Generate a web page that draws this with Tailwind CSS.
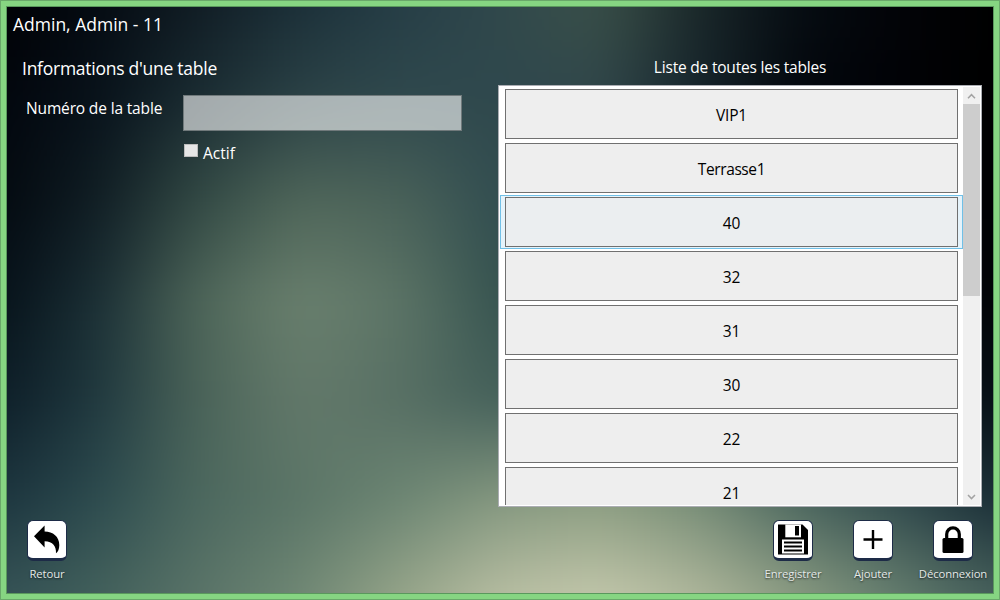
<!DOCTYPE html>
<html lang="fr">
<head>
<meta charset="utf-8">
<title>Tables</title>
<script src="https://cdn.jsdelivr.net/npm/@tailwindcss/browser@4"></script>
</head>
<body class="w-[1000px] h-[600px] overflow-hidden font-['Open_Sans','Noto_Sans',sans-serif]">
<div class="relative isolate w-[1000px] h-[600px] border border-[#6aa86a] overflow-hidden">
  <!-- Soft backdrop: horizontal colour bands blended together -->
  <svg id="backdrop" class="absolute -left-px -top-px -z-10" width="1000" height="600" viewBox="0 0 1000 600"></svg>
  <div class="w-full h-full border-[5px] border-[#86d582]">
  <div class="w-full h-full border border-[#5a985d] flex flex-col text-white">
    <header class="h-[38px] pl-1.5 pt-[4px] text-[17.5px] leading-[26px] whitespace-nowrap">Admin, Admin - 11</header>
    <main class="flex h-[462px]">
      <section class="w-[491px] pl-[15px]">
        <h1 class="text-[17.5px] leading-[26px] mt-[10px] tracking-[-0.26px]">Informations d'une table</h1>
        <div class="flex mt-[14px]">
          <label class="w-[161px] pl-1 pt-px text-[15.5px] leading-[24px] tracking-[-0.15px] whitespace-nowrap">Numéro de la table</label>
          <div class="w-[279px] h-[36px] bg-white/60 border border-[#70797b]"></div>
        </div>
        <div class="flex mt-[10px] pl-[162px]">
          <span class="w-[14px] h-[13px] mt-[3px] bg-[#e6e6e6] border border-[#bcbcbc]"></span>
          <span class="ml-[5px] text-[15.5px] leading-[24px]">Actif</span>
        </div>
      </section>
      <section class="w-[484px]">
        <h2 class="text-[15.5px] leading-[24px] mt-[10px] text-center tracking-[-0.2px]">Liste de toutes les tables</h2>
        <div class="mt-[6px] h-[422px] border border-[#abadb3] bg-white p-px flex">
          <ul class="w-[463px] h-[418px] overflow-hidden text-black text-[15.5px] tracking-[-0.2px]">
            <li class="h-[54px] px-[5px] py-[2px]"><div class="h-[50px] border border-[#707070] bg-[#eee] flex items-center justify-center pt-[3px]">VIP1</div></li>
            <li class="h-[54px] px-[5px] py-[2px]"><div class="h-[50px] border border-[#707070] bg-[#eee] flex items-center justify-center pt-[3px] tracking-[-0.4px]">Terrasse1</div></li>
            <li class="h-[54px] px-[4px] py-px border border-[#70c0e7] bg-[#e5f3fb]"><div class="h-[50px] border border-[#707070] bg-[#ebeef0] flex items-center justify-center pt-[3px]">40</div></li>
            <li class="h-[54px] px-[5px] py-[2px]"><div class="h-[50px] border border-[#707070] bg-[#eee] flex items-center justify-center pt-[3px]">32</div></li>
            <li class="h-[54px] px-[5px] py-[2px]"><div class="h-[50px] border border-[#707070] bg-[#eee] flex items-center justify-center pt-[3px]">31</div></li>
            <li class="h-[54px] px-[5px] py-[2px]"><div class="h-[50px] border border-[#707070] bg-[#eee] flex items-center justify-center pt-[3px]">30</div></li>
            <li class="h-[54px] px-[5px] py-[2px]"><div class="h-[50px] border border-[#707070] bg-[#eee] flex items-center justify-center pt-[3px]">22</div></li>
            <li class="h-[54px] px-[5px] py-[2px]"><div class="h-[50px] border border-[#707070] bg-[#eee] flex items-center justify-center pt-[3px]">21</div></li>
          </ul>
          <div class="w-[17px] h-[418px] bg-[#f0f0f0] flex flex-col">
            <svg class="h-[17px] shrink-0" width="17" height="17"><path d="M5 11.3 8.5 7.7 12 11.3" fill="none" stroke="#a3a3a3" stroke-width="1.5"/></svg>
            <div class="h-[192px] shrink-0 bg-[#cdcdcd]"></div>
            <svg class="mt-auto h-[17px] shrink-0" width="17" height="17"><path d="M5 7 8.5 10.6 12 7" fill="none" stroke="#a3a3a3" stroke-width="1.5"/></svg>
          </div>
        </div>
      </section>
    </main>
    <footer class="flex pt-[13px] text-[11.3px] leading-[16px] font-medium text-[#e4e9e8] [text-shadow:0_1px_2px_#000a]">
      <div class="w-[80px] flex flex-col items-center">
        <div class="w-10 h-[41px] rounded-[6px] bg-white border border-b-3 border-[#1d2b47]"><svg width="38" height="37" viewBox="0 0 38 37"><path d="M6 15.3 16.6 4.5V10.4C25 10.5 31.3 15.5 31.3 24C31.3 28 30 31.2 28 32.3C28.3 25.5 25 20.5 16.6 20.3V26.5Z"/></svg></div>
        <span class="mt-[5px] tracking-[-0.1px]">Retour</span>
      </div>
      <div class="ml-auto w-[80px] flex flex-col items-center">
        <div class="w-10 h-[41px] rounded-[6px] bg-white border border-b-3 border-[#1d2b47]"><svg width="38" height="37" viewBox="0 0 38 37"><path d="M4 3.5H28.5L34 9V33.5H4Z"/><path d="M11.3 3.5H27V16.3H11.3Z" fill="#fff"/><path d="M21 5H25V14.5H21Z"/><path d="M8 18.5H30V32.5H8Z" fill="#fff"/><path d="M10 21.5H28M10 25.5H28M10 29.5H28" stroke="#000" stroke-width="1.9"/></svg></div>
        <span class="mt-[5px] tracking-[-0.1px]">Enregistrer</span>
      </div>
      <div class="w-[80px] flex flex-col items-center">
        <div class="w-10 h-[41px] rounded-[6px] bg-white border border-b-3 border-[#1d2b47]"><svg width="38" height="37" viewBox="0 0 38 37"><path d="M9.5 18.5H28.5M19 9V28" stroke="#000" stroke-width="2.4"/></svg></div>
        <span class="mt-[5px] tracking-[-0.1px]">Ajouter</span>
      </div>
      <div class="w-[80px] flex flex-col items-center">
        <div class="w-10 h-[41px] rounded-[6px] bg-white border border-b-3 border-[#1d2b47]"><svg width="38" height="37" viewBox="0 0 38 37"><rect x="8.5" y="17" width="21" height="15" rx="1.5"/><path d="M12.7 18V13.2A6.3 6.3 0 0 1 25.3 13.2V18" fill="none" stroke="#000" stroke-width="3.2"/></svg></div>
        <span class="mt-[5px] tracking-[-0.1px]">Déconnexion</span>
      </div>
    </footer>
  </div>
  </div>
</div>
<script>
// Each band: centre y, then colours at x = 0, 100, ... 1000
const bands = [
 [0,'000004 050b12 101c24 1b2f38 253d46 30484c 3a5049 1a2729 060c12 020307 000000'],
 [100,'02060d 08121a 1b2d33 2b4246 30494d 2f484d 30464a 15242b 02060c 010206 000000'],
 [200,'03090f 101e25 334a45 50675a 4a6259 314d50 2c474b 15252c 050b12 02040a 000003'],
 [300,'061119 1b2f35 4e6659 6a806e 5c7466 36534f 2c474b 1c3036 0c171e 05090f 010307'],
 [400,'0d1e28 203940 4b6459 63796a 587064 44605a 4a645c 3c544f 20353a 101d25 060e15'],
 [500,'1c343e 2d4c4f 4c685e 5b7567 6c8573 859880 8e9f83 788e77 4c675f 324c4e 192d36'],
 [600,'355356 43615c 5a7469 6f8774 96a589 b9bfa3 c4c8ac b0b79c 8a9b81 647d6e 455f5b']
];
let defs = '<filter id="soft" x="-20%" y="-20%" width="140%" height="140%" color-interpolation-filters="sRGB"><feGaussianBlur stdDeviation="26 16"/></filter>', rects = '';
const rgb = c => [0, 2, 4].map(i => parseInt(c.substr(i, 2), 16));
for (let y = -60; y < 660; y += 10) {
  const t = Math.max(0, Math.min(5.999, (y + 5) / 100)), k = Math.floor(t), f = t - k;
  const a = bands[k][1].split(' '), b = bands[k + 1][1].split(' ');
  defs += `<linearGradient id="g${y}" gradientUnits="userSpaceOnUse" x1="0" y1="0" x2="1000" y2="0">` +
    a.map((c, i) => { const p = rgb(c), q = rgb(b[i]); return `<stop offset="${i / 10}" stop-color="rgb(${p.map((v, j) => v + (q[j] - v) * f).join(',')})"/>`; }).join('') + '</linearGradient>';
  rects += `<rect x="-80" y="${y}" width="1160" height="11" fill="url(#g${y})"/>`;
}
document.getElementById('backdrop').innerHTML = `<defs>${defs}</defs><g filter="url(#soft)">${rects}</g>`;
</script>
</body>
</html>
